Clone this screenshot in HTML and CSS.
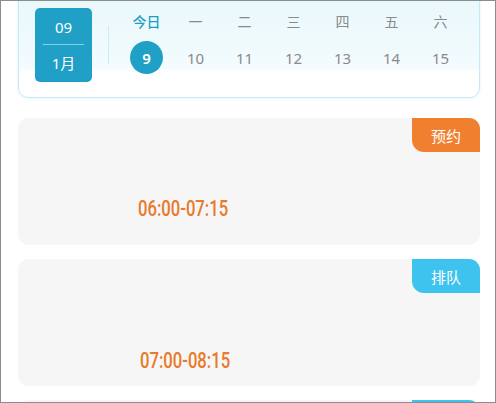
FILE: index.html
```html
<!DOCTYPE html>
<html lang="zh">
<head>
<meta charset="utf-8">
<link rel="stylesheet" href="styles.css">
</head>
<body>
<div class="frame">
  <div class="calendar">
    <div class="month">
      <div class="month-day">09</div>
      <div class="month-line"></div>
      <div class="month-name">1月</div>
    </div>
    <div class="vdivider"></div>
    <div class="week">
      <div class="wlabel today">今日</div>
      <div class="wlabel">一</div>
      <div class="wlabel">二</div>
      <div class="wlabel">三</div>
      <div class="wlabel">四</div>
      <div class="wlabel">五</div>
      <div class="wlabel">六</div>
      <div class="wday"><span class="circle">9</span></div>
      <div class="wday">10</div>
      <div class="wday">11</div>
      <div class="wday">12</div>
      <div class="wday">13</div>
      <div class="wday">14</div>
      <div class="wday">15</div>
    </div>
  </div>

  <div class="card card-first">
    <div class="badge badge-orange">预约</div>
    <div class="time time-first"><span>06:00-07:15</span></div>
  </div>
  <div class="card card-second">
    <div class="badge badge-blue">排队</div>
    <div class="time time-second"><span>07:00-08:15</span></div>
  </div>
  <div class="card">
    <div class="badge badge-blue"></div>
  </div>
</div>
</body>
</html>
```

FILE: styles.css
```css
html, body {
  margin: 0;
  padding: 0;
  background: #ffffff;
}
body {
  font-family: "Noto Sans", "Noto Sans CJK SC", sans-serif;
}
.frame {
  width: 496px;
  height: 403px;
  box-sizing: border-box;
  border: 1px solid #8c8c8c;
  padding: 0 15px 0 17px;
  overflow: hidden;
  background: #fff;
}
.calendar {
  margin-top: -11px;
  height: 108px;
  box-sizing: border-box;
  border: 1px solid #c4ebf5;
  border-radius: 10px;
  background: linear-gradient(180deg, #e8f8fc 0%, #f3fbfd 72%, #ffffff 77%, #ffffff 100%);
  box-shadow: 0 0 3px rgba(150, 215, 235, 0.35);
  display: flex;
  align-items: flex-start;
  padding: 17px 0 0 16px;
}
.month {
  width: 57px;
  height: 74px;
  background: #20a0c6;
  border-radius: 5px;
  display: flex;
  flex-direction: column;
  align-items: center;
  padding-top: 9px;
  box-sizing: border-box;
  color: #fff;
}
.month-day, .month-name {
  font-size: 15px;
  line-height: 20px;
  height: 20px;
}
.month-line {
  width: 41px;
  height: 1px;
  background: #86d2e8;
  margin-top: 7px;
}
.month-name {
  margin-top: 8px;
}
.vdivider {
  width: 1px;
  height: 38px;
  background: #c9ecf5;
  margin: 18px 0 0 16px;
}
.week {
  margin-left: 13px;
  display: grid;
  grid-template-columns: repeat(7, 49px);
  grid-template-rows: 26px 33px;
  row-gap: 7px;
}
.wlabel {
  display: flex;
  align-items: center;
  justify-content: center;
  font-size: 14px;
  color: #8a8a8a;
}
.wlabel.today {
  color: #1f9ec4;
  font-weight: 500;
}
.wday {
  display: flex;
  align-items: center;
  justify-content: center;
  font-size: 15px;
  color: #8a8a8a;
}
.circle {
  width: 33px;
  height: 33px;
  border-radius: 50%;
  background: #20a0c6;
  color: #fff;
  font-weight: 600;
  display: flex;
  align-items: center;
  justify-content: center;
  font-size: 15px;
}
.card {
  position: relative;
  margin-top: 14px;
  width: 462px;
  height: 127px;
  background: #f6f6f6;
  border-radius: 11px;
}
.card-first {
  margin-top: 20px;
}
.badge {
  position: absolute;
  top: 0;
  right: 0;
  width: 68px;
  height: 34px;
  border-radius: 0 11px 0 12px;
  color: #fff;
  font-size: 15px;
  display: flex;
  align-items: center;
  justify-content: center;
}
.badge-orange {
  background: #f07f2f;
}
.badge-blue {
  background: #3ec2ee;
}
.time {
  position: absolute;
  left: 120px;
  color: #e9792b;
  font-family: Roboto, "Liberation Sans", sans-serif;
  font-weight: 500;
  font-size: 22.5px;
  line-height: 24px;
  white-space: nowrap;
}
.time span {
  display: inline-block;
  transform: scaleX(0.74);
  transform-origin: left center;
}
.time-first {
  top: 78px;
}
.time-second {
  top: 89px;
  left: 122px;
}
```
